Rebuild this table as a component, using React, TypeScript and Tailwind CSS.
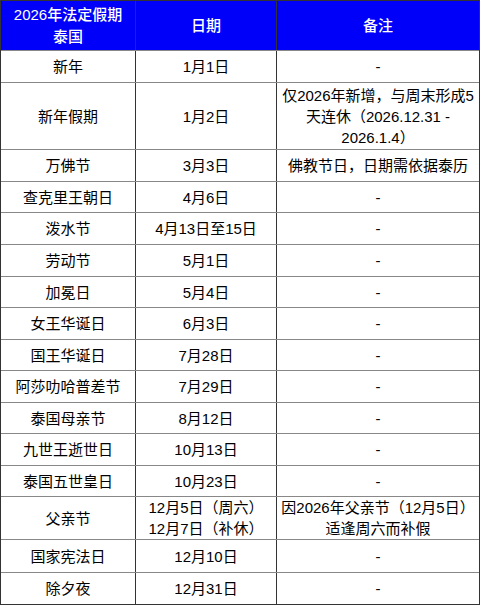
const rows: { name: string; date: React.ReactNode; note: React.ReactNode; h: string }[] = [
  { name: "新年", date: "1月1日", note: "-", h: "h-[32px]" },
  {
    name: "新年假期",
    date: "1月2日",
    note: (
      <>
        仅2026年新增，与周末形成5
        <br />
        天连休（2026.12.31 -
        <br />
        2026.1.4）
      </>
    ),
    h: "h-[67px]",
  },
  { name: "万佛节", date: "3月3日", note: "佛教节日，日期需依据泰历", h: "h-[32px]" },
  { name: "查克里王朝日", date: "4月6日", note: "-", h: "h-[31px]" },
  { name: "泼水节", date: "4月13日至15日", note: "-", h: "h-[32px]" },
  { name: "劳动节", date: "5月1日", note: "-", h: "h-[32px]" },
  { name: "加冕日", date: "5月4日", note: "-", h: "h-[31px]" },
  { name: "女王华诞日", date: "6月3日", note: "-", h: "h-[32px]" },
  { name: "国王华诞日", date: "7月28日", note: "-", h: "h-[31px]" },
  { name: "阿莎叻哈普差节", date: "7月29日", note: "-", h: "h-[32px]" },
  { name: "泰国母亲节", date: "8月12日", note: "-", h: "h-[31px]" },
  { name: "九世王逝世日", date: "10月13日", note: "-", h: "h-[32px]" },
  { name: "泰国五世皇日", date: "10月23日", note: "-", h: "h-[31px]" },
  {
    name: "父亲节",
    date: (
      <>
        12月5日（周六）
        <br />
        12月7日（补休）
      </>
    ),
    note: (
      <>
        因2026年父亲节（12月5日）
        <br />
        适逢周六而补假
      </>
    ),
    h: "h-[43px]",
  },
  { name: "国家宪法日", date: "12月10日", note: "-", h: "h-[33px]" },
  { name: "除夕夜", date: "12月31日", note: "-", h: "h-[32px]" },
];

export default function App() {
  return (
    <div className="w-[480px] h-[605px] bg-white overflow-hidden text-[15px] text-black font-['Liberation_Sans','Noto_Sans_CJK_SC',sans-serif]">
      <div className="border-x border-t border-[#333] w-[480px]">
        {/* Header */}
        <div className="flex h-[50px] bg-[#0000fa] text-white font-medium leading-[22px] border-b border-[#888]">
          <div className="w-[135px] shrink-0 flex items-center justify-center text-center border-r border-[#333]">
            <div>
              2026年法定假期
              <br />
              泰国
            </div>
          </div>
          <div className="w-[141px] shrink-0 flex items-center justify-center border-r border-[#333]">日期</div>
          <div className="flex-1 flex items-center justify-center">备注</div>
        </div>

        {rows.map((r, i) => (
          <div
            key={i}
            className={`flex leading-[21px] border-b ${i === rows.length - 1 ? "border-[#333]" : "border-[#888]"} ${r.h}`}
          >
            <div className="w-[135px] shrink-0 flex items-center justify-center text-center border-r border-[#333]">
              {r.name}
            </div>
            <div className="w-[141px] shrink-0 flex items-center justify-center text-center whitespace-nowrap border-r border-[#333]">
              <div>{r.date}</div>
            </div>
            <div className="flex-1 flex items-center justify-center text-center whitespace-nowrap">
              <div>{r.note}</div>
            </div>
          </div>
        ))}
      </div>
    </div>
  );
}
